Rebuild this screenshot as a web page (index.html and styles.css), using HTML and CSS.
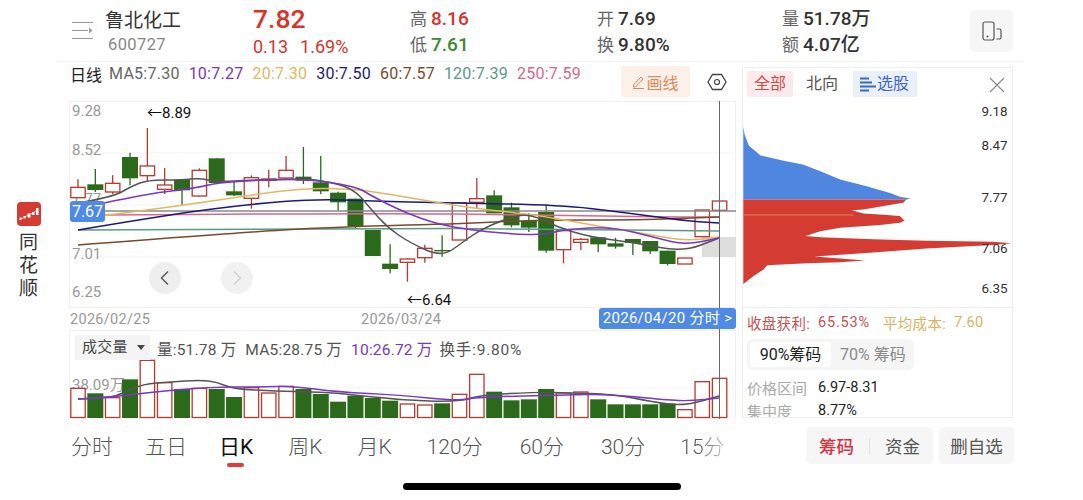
FILE: index.html
```html
<!DOCTYPE html>
<html lang="zh">
<head>
    <meta charset="UTF-8">
    <title>鲁北化工</title>
    <link rel="stylesheet" href="styles.css">
</head>
<body>
<div class="page">
    <div class="header">
        <svg class="menu-icon" width="22" height="20" viewBox="0 0 22 20">
            <path d="M0 1.5H21M0 9.5H16M0 17.5H21" stroke="#999" stroke-width="1.2" fill="none"/>
            <path d="M17 6.5L20.5 9.5L17 12.5Z" fill="#999"/>
        </svg>
        <div class="stock">
            <div class="stock-name">鲁北化工</div>
            <div class="stock-code">600727</div>
        </div>
        <div class="quote">
            <div class="price">7.82</div>
            <div class="change"><span>0.13</span><span>1.69%</span></div>
        </div>
        <div class="cell cell-hl">
            <div><em>高</em><b class="up">8.16</b></div>
            <div><em>低</em><b class="down">7.61</b></div>
        </div>
        <div class="cell cell-op">
            <div><em>开</em><b>7.69</b></div>
            <div><em>换</em><b>9.80%</b></div>
        </div>
        <div class="cell cell-vol">
            <div><em>量</em><b>51.78万</b></div>
            <div><em>额</em><b>4.07亿</b></div>
        </div>
        <div class="rotate-btn">
            <svg width="20" height="20" viewBox="0 0 20 20">
                <rect x="1" y="1" width="11" height="18" rx="2" fill="none" stroke="#555" stroke-width="1.2"/>
                <circle cx="5.5" cy="15.5" r="1" fill="#555"/>
                <path d="M14.5 8H17.5Q19 8 19 9.5V16.5Q19 18 17.5 18H14.5" fill="none" stroke="#555" stroke-width="1.2"/>
            </svg>
        </div>
    </div>

    <div class="main">
        <div class="side">
            <svg class="logo" width="24" height="24" viewBox="0 0 24 24">
                <rect width="24" height="24" rx="4" fill="#d43c33"/>
                <path d="M3 17L7 15.5L11 13L15 11.5L20 8" stroke="#f3b5ae" stroke-width="1" fill="none"/>
                <rect x="2.5" y="15.5" width="2" height="2.5" fill="#fff"/>
                <rect x="6.5" y="14" width="2" height="2.5" fill="#fff"/>
                <rect x="10.5" y="11.5" width="3" height="4" fill="#fff"/>
                <rect x="15" y="10" width="2.5" height="3" fill="#fff"/>
                <rect x="19" y="6" width="2.5" height="7" fill="#fff"/>
            </svg>
            <div class="app-name">同<br>花<br>顺</div>
        </div>

        <div class="chart-col">
            <div class="ma-row">
                <span class="ma-title">日线</span>
                <span class="ma c-ma5">MA5:7.30</span>
                <span class="ma c-ma10">10:7.27</span>
                <span class="ma c-ma20">20:7.30</span>
                <span class="ma c-ma30">30:7.50</span>
                <span class="ma c-ma60">60:7.57</span>
                <span class="ma c-ma120">120:7.39</span>
                <span class="ma c-ma250">250:7.59</span>
                <span class="draw-btn">
                    <svg width="13" height="14" viewBox="0 0 13 14">
                        <path d="M1.5 10L9 2L11 4L3.5 12H1.5ZM1 13.5H12" fill="none" stroke="#dc8a5c" stroke-width="1"/>
                    </svg>画线
                </span>
                <svg class="gear" width="20" height="18" viewBox="0 0 20 18">
                    <path d="M5.5 1.5H14.5L19 9L14.5 16.5H5.5L1 9Z" fill="none" stroke="#444" stroke-width="1.3"/>
                    <circle cx="10" cy="9" r="2.5" fill="none" stroke="#444" stroke-width="1.2"/>
                </svg>
            </div>

            <div class="kline">
                <svg id="klineSvg" width="667" height="207" viewBox="69 101 667 207"></svg>
                <div class="nav-btn nav-prev">
                    <svg width="12" height="16" viewBox="0 0 12 16"><path d="M9 1.5L2.5 8L9 14.5" fill="none" stroke="#555" stroke-width="1.4"/></svg>
                </div>
                <div class="nav-btn nav-next">
                    <svg width="12" height="16" viewBox="0 0 12 16"><path d="M3 1.5L9.5 8L3 14.5" fill="none" stroke="#d0d0d0" stroke-width="1.4"/></svg>
                </div>
                <div class="last-label">7.67</div>
            </div>

            <div class="date-row">
                <span class="date-first">2026/02/25</span>
                <span>2026/03/24</span>
                <span class="date-tag">2026/04/20 分时 &gt;</span>
            </div>

            <div class="volume">
                <svg id="volSvg" width="667" height="89" viewBox="69 330 667 89"></svg>
                <div class="vol-head">
                    <span class="vol-tag">成交量<i class="caret"></i></span>
                    <span class="vol-text">量:51.78 万</span>
                    <span class="vol-text">MA5:28.75 万</span>
                    <span class="vol-text c-ma10">10:26.72 万</span>
                    <span class="vol-text vol-turn">换手:9.80%</span>
                </div>
            </div>

            <div class="crosshair"></div>

            <div class="tabs">
                <span class="tab-cn">分时</span>
                <span class="tab-cn">五日</span>
                <span class="tab-on">日K</span>
                <span>周K</span>
                <span>月K</span>
                <span class="tab-wide">120分</span>
                <span class="tab-wide">60分</span>
                <span>30分</span>
                <span class="tab-fade">15分</span>
            </div>
        </div>

        <div class="right-col">
            <div class="panel">
                <div class="panel-tabs">
                    <span class="ptab ptab-on">全部</span>
                    <span class="ptab">北向</span>
                    <span class="ptab ptab-pick">
                        <svg width="16" height="15" viewBox="0 0 16 15">
                            <path d="M0 1.5H9M0 5.5H12M0 9.5H16M0 13.5H9" stroke="#3f66c8" stroke-width="1.8"/>
                        </svg>选股
                    </span>
                    <svg class="close" width="16" height="16" viewBox="0 0 16 16">
                        <path d="M1 1L15 15M15 1L1 15" stroke="#888" stroke-width="1.1"/>
                    </svg>
                </div>
                <svg class="chips" id="chipSvg" width="269" height="210" viewBox="743 98 269 210"></svg>
                <div class="profit">
                    <span class="profit-a profit-label">收盘获利:</span><span class="profit-a profit-num">65.53%</span>
                    <span class="profit-b profit-label">平均成本:</span><span class="profit-b">7.60</span>
                </div>
                <div class="seg">
                    <span class="seg-on">90%筹码</span>
                    <span>70% 筹码</span>
                </div>
                <div class="info"><span>价格区间</span><b>6.97-8.31</b></div>
                <div class="info"><span>集中度</span><b>8.77%</b></div>
            </div>
            <div class="actions">
                <div class="act-group">
                    <span class="act-on">筹码</span>
                    <i class="act-sep"></i>
                    <span>资金</span>
                </div>
                <div class="act-del">删自选</div>
            </div>
        </div>
    </div>

    <div class="home-bar"></div>
</div>
<script src="chart.js"></script>
</body>
</html>
```

FILE: styles.css
```css
*{
    margin: 0px;
    padding: 0px;
    box-sizing: border-box;
}
body{
    background: #fff;
    font-family: Roboto, "Noto Sans CJK SC", sans-serif;
    color: #333;
}
em, i{font-style: normal;}
.page{
    width: 1083px;
    height: 500px;
    position: relative;
    overflow: hidden;
}
.up{color: #d9332b;}
.down{color: #3c8a2e;}

/* header */
.header{
    height: 62px;
    margin: 0 60px 0 57px;
    padding-left: 15px;
    border-bottom: 1px solid #f3f3f3;
    display: flex;
    align-items: center;
}
.menu-icon{margin-top: 1px;}
.stock{
    width: 159px;
    padding: 2px 0 0 11px;
}
.stock-name{
    font-size: 19px;
    line-height: 26px;
    color: #333;
}
.stock-code{
    font-size: 16.5px;
    line-height: 22px;
    color: #888;
    padding-left: 3px;
    letter-spacing: .4px;
}
.quote{width: 157px;}
.price{
    font-size: 26.5px;
    font-weight: 500;
    line-height: 30px;
    color: #d9332b;
}
.change{
    font-size: 18px;
    line-height: 22px;
    color: #d9332b;
    margin-top: 2px;
    display: flex;
    gap: 12px;
}
.cell{
    font-size: 19px;
    line-height: 25px;
    padding-top: 2px;
}
.cell em{
    font-size: 17px;
    color: #666;
    margin-right: 4px;
}
.cell b{font-weight: 500; color: #333;}
.cell b.up{color: #d9332b;}
.cell b.down{color: #3c8a2e;}
.cell-hl{width: 187px;}
.cell-op{width: 185px;}
.cell-vol{width: 188px;}
.rotate-btn{
    width: 43px;
    height: 42px;
    background: #f6f6f6;
    border-radius: 5px;
    display: flex;
    align-items: center;
    justify-content: center;
}

/* body columns */
.main{display: flex;}
.side{
    width: 57px;
    padding-top: 140px;
    display: flex;
    flex-direction: column;
    align-items: center;
}
.logo{display: block;}
.app-name{
    font-size: 19px;
    line-height: 23px;
    margin-top: 5px;
    color: #333;
}
.chart-col{
    width: 667px;
    margin-left: 12px;
    position: relative;
}

/* ma row */
.ma-row{
    height: 39px;
    padding: 0 0 16px 1px;
    display: flex;
    align-items: center;
    font-size: 16px;
}
.ma-title{color: #222; margin-right: 7px;}
.ma{margin-right: 9px; letter-spacing: .25px;}
.c-ma5{color: #666;}
.c-ma10{color: #7a35c9;}
.c-ma20{color: #e3b85f;}
.c-ma30{color: #1a1a7a;}
.c-ma60{color: #7a4a2c;}
.c-ma120{color: #5a9a86;}
.c-ma250{color: #d8678a;}
.draw-btn{
    position: absolute;
    left: 552px;
    top: 4px;
    width: 69px;
    height: 31px;
    background: #fdf0e8;
    border-radius: 2px;
    color: #dc8a5c;
    font-size: 16px;
    display: flex;
    align-items: center;
    justify-content: center;
    gap: 1px;
}
.gear{
    position: absolute;
    left: 638px;
    top: 11px;
}

/* k line */
.kline{
    height: 207px;
    position: relative;
    border: 1px solid #f0f0f0;
}
.kline svg, .volume > svg{
    position: absolute;
    left: -1px;
    top: -1px;
}
.nav-btn{
    position: absolute;
    width: 32px;
    height: 32px;
    top: 160px;
    border-radius: 50%;
    display: flex;
    align-items: center;
    justify-content: center;
}
.nav-btn svg{position: static;}
.nav-prev{left: 79px; background: #eee;}
.nav-next{left: 151px; background: #f1f1f1;}
.last-label{
    position: absolute;
    left: 0;
    top: 99px;
    width: 35px;
    height: 21px;
    background: #4f8ae6;
    border-radius: 3px;
    color: #fff;
    font-size: 16px;
    line-height: 21px;
    text-align: center;
}
.date-row{
    height: 22px;
    padding-left: 1px;
    display: flex;
    align-items: center;
    font-size: 14.5px;
    color: #999;
    letter-spacing: .3px;
    position: relative;
}
.date-first{width: 291px;}
.date-tag{
    position: absolute;
    right: 0;
    top: 0;
    width: 137px;
    height: 21px;
    background: #4f8ae6;
    border-radius: 3px;
    color: #fff;
    font-size: 15px;
    line-height: 21px;
    text-align: center;
    z-index: 2;
}
.crosshair{
    position: absolute;
    left: 650px;
    top: 39px;
    width: 1px;
    height: 318px;
    background: #666;
}

/* volume */
.volume{
    height: 89px;
    position: relative;
    border: 1px solid #f0f0f0;
    border-bottom: 0;
}
.vol-head{
    position: relative;
    padding: 4px 0 0 5px;
    display: flex;
    align-items: center;
    font-size: 15.5px;
    color: #555;
    letter-spacing: .2px;
}
.vol-tag{
    width: 75px;
    height: 25px;
    background: #f4f4f4;
    color: #444;
    padding-left: 7px;
    font-size: 15px;
    line-height: 25px;
    display: flex;
    align-items: center;
    margin-right: 7px;
}
.caret{
    width: 0;
    height: 0;
    margin-left: 9px;
    border-left: 4px solid transparent;
    border-right: 4px solid transparent;
    border-top: 5px solid #444;
}
.vol-text{margin-right: 9px;}
.vol-turn{margin-left: -2px; letter-spacing: .8px;}

/* bottom tabs */
.tabs{
    height: 51px;
    padding-left: 2px;
    display: flex;
    align-items: center;
    gap: 35px;
    font-size: 21px;
    font-weight: 300;
    color: #555;
}
.tab-cn{margin-right: -3px;}
.tab-wide{margin-right: 2px;}
.tab-on{
    color: #111;
    font-weight: 400;
    position: relative;
}
.tab-on::after{
    content: "";
    position: absolute;
    left: 8px;
    bottom: -7px;
    width: 17px;
    height: 4px;
    border-radius: 2px;
    background: #e23b3b;
}
.tab-fade{
    color: transparent;
    background: linear-gradient(90deg, #555 40%, #ccc 100%);
    -webkit-background-clip: text;
    background-clip: text;
}

/* right panel */
.right-col{
    width: 272px;
    margin-left: 6px;
    padding-top: 5px;
}
.panel{
    width: 271px;
    height: 351px;
    border: 1px solid #eee;
    overflow: hidden;
}
.panel-tabs{
    height: 30px;
    padding: 3px 0 0 4px;
    display: flex;
    align-items: flex-start;
    position: relative;
}
.ptab{
    height: 26px;
    line-height: 26px;
    font-size: 16px;
    color: #555;
    padding: 0 7px;
    margin-right: 6px;
    display: flex;
    align-items: center;
}
.ptab-on{
    color: #cf4a4a;
    background: #fdeaea;
    border-radius: 2px;
}
.ptab-pick{
    color: #3f66c8;
    background: #e9effb;
    border-radius: 2px;
    margin-left: 2px;
    gap: 1px;
    padding: 0 8px 0 7px;
}
.close{
    position: absolute;
    right: 7px;
    top: 9px;
}
.chips{
    display: block;
    border-bottom: 1px solid #eee;
}
.profit{
    height: 29px;
    padding-left: 4px;
    display: flex;
    align-items: center;
    font-size: 14.5px;
    letter-spacing: .3px;
}
.profit-a{color: #c8504f;}
.profit-label{width: 71px; white-space: nowrap;}
.profit-num{width: 65px; letter-spacing: .8px;}
.profit-b{color: #dcb161;}
.seg{
    width: 167px;
    height: 31px;
    margin: 2px 0 0 4px;
    padding: 3px;
    background: #f5f5f5;
    border-radius: 6px;
    display: flex;
    align-items: center;
    font-size: 16px;
    color: #888;
}
.seg span{
    height: 25px;
    line-height: 25px;
    padding-left: 9px;
    white-space: nowrap;
}
.seg .seg-on{
    background: #fff;
    color: #222;
    border-radius: 4px;
    width: 81px;
    text-align: center;
    padding: 0;
}
.info{
    height: 23px;
    padding-left: 4px;
    display: flex;
    align-items: center;
    font-size: 15px;
    color: #aaa;
}
.seg + .info{margin-top: 6px;}
.info span{width: 71px;}
.info b{
    font-weight: 400;
    font-size: 14.5px;
    color: #222;
}
.actions{
    margin: 9px 0 0 64px;
    display: flex;
    gap: 6px;
}
.act-group, .act-del{
    height: 37px;
    background: #f6f6f6;
    border-radius: 5px;
    font-size: 17.5px;
    color: #555;
    display: flex;
    align-items: center;
    justify-content: center;
}
.act-group{
    width: 127px;
    gap: 15px;
}
.act-on{color: #d9323f; font-weight: 500;}
.act-sep{
    width: 1px;
    height: 16px;
    background: #e2e2e2;
}
.act-del{width: 75px;}

.home-bar{
    position: absolute;
    left: 403px;
    top: 483px;
    width: 278px;
    height: 7px;
    border-radius: 4px;
    background: #000;
}

/* svg bits */
.axis{
    font-size: 15px;
    fill: #999;
}
.mark{
    font-size: 15px;
    fill: #111;
}
.chip-price{
    font-size: 13.5px;
    fill: #333;
}
```

FILE: chart.js
```js
var RED = "#b9382e";
var GREEN = "#2a6a1a";
var STEP = 17.34;

function cx(i) {
    return 78 + STEP * i;
}

// r/g, body top, body bottom, wick top, wick bottom (read off at 3x, y = 100 + v/3)
var candles = [
    ["r",262,293,238,293],["g",253,270,207,276],["r",250,276,226,282],["g",171,235,158,256],
    ["r",198,227,84,243],["r",255,268,204,282],["g",240,271,240,316],["r",211,288,205,290],
    ["g",175,249,175,249],["g",274,286,245,288],["r",233,295,226,326],["r",237,241,209,262],
    ["r",211,234,168,240],["g",230,242,141,252],["g",247,274,168,282],["g",278,307,275,332],
    ["g",296,380,296,384],["g",390,468,390,468],["g",491,507,433,520],["r",477,487,475,545],
    ["r",445,473,434,488],["g",450,454,406,470],["r",308,420,308,420],["r",296,307,234,325],
    ["g",286,340,271,340],["g",322,376,308,382],["g",363,383,340,396],["g",336,452,314,458],
    ["r",392,449,392,490],["r",418,427,415,450],["g",412,433,412,457],["g",430,440,413,446],
    ["g",417,429,417,465],["g",423,454,423,462],["g",452,492,452,496],["r",474,492,474,492],
    ["r",330,410,330,410],["r",303,331,303,331]
];

var lines = [
    ["#d8678a",[[104,215],[370,213],[537,215],[670,217],[719,217]]],
    ["#5a9a86",[[78,230],[370,228],[537,229],[719,231]]],
    ["#7a4a2c",[[78,245],[233,233],[333,227],[453,224],[537,220],[637,220],[719,217]]],
    ["#1a1a7a",[[78,230],[167,215],[250,204],[317,199],[370,201],[450,203],[560,205],[620,212],[687,221],[719,223]]],
    ["#e3b85f",[[100,216],[187,205],[250,195],[307,188],[347,189],[370,191],[440,203],[487,210],[537,215],[603,227],[653,235],[685,241],[719,237]]],
    ["#555",[[78,203],[113,197],[130,187],[147,180],[182,180],[200,178],[217,182],[250,180],[300,179],[320,180],[353,188],[370,208],[387,227],[410,243],[442,257],[463,242],[480,230],[503,220],[528,213],[557,227],[590,237],[637,243],[683,252],[719,238]]],
    ["#7a35c9",[[104,203],[147,194],[180,190],[200,187],[217,183],[260,180],[310,179],[357,187],[370,195],[403,212],[440,225],[480,231],[513,234],[543,235],[567,229],[613,227],[657,238],[685,245],[719,238]]]
];

var volTops = [250,265,278,223,166,233,252,250,252,276,248,264,244,252,267,290,272,279,287,297,
    300,295,268,208,260,286,283,252,264,261,283,298,298,298,295,314,230,220];

var volLines = [
    ["#555",[[78,399],[110,398],[123,393],[143,384],[170,382],[200,380],[217,382],[233,389],[277,391],[313,392],[337,393],[400,400],[458,402],[480,395],[540,392],[567,393],[613,394],[653,402],[684,406],[719,396]]],
    ["#7a35c9",[[78,399],[113,397],[153,392],[210,387],[260,387],[293,386],[337,392],[400,395],[457,401],[480,397],[567,395],[607,394],[667,400],[690,401],[719,398]]]
];

var chipBlue = [[8,200],[12,225],[25,258],[60,287],[130,303],[190,315],[240,335],[300,360],[380,380],[450,400],[480,412],[512,417],[500,420],[8,420]];
var chipRed = [[8,420],[500,420],[490,430],[440,438],[370,450],[335,452],[370,462],[430,466],[480,470],[494,484],[480,490],[420,497],[300,505],[240,516],[195,530],[240,534],[400,540],[560,544],[760,547],[818,552],[760,557],[560,568],[420,578],[280,588],[222,592],[300,598],[375,604],[300,609],[200,612],[80,618],[70,630],[40,650],[8,675]];

function smooth(pts) {
    var d = "M" + pts[0][0] + " " + pts[0][1];
    for (var i = 1; i < pts.length - 1; i++) {
        var mx = (pts[i][0] + pts[i + 1][0]) / 2;
        var my = (pts[i][1] + pts[i + 1][1]) / 2;
        d += "Q" + pts[i][0] + " " + pts[i][1] + " " + mx + " " + my;
    }
    var last = pts[pts.length - 1];
    return d + "L" + last[0] + " " + last[1];
}

function drawLines(list, width) {
    var s = "";
    for (var i = 0; i < list.length; i++) {
        s += '<path d="' + smooth(list[i][1]) + '" fill="none" stroke="' + list[i][0] + '" stroke-width="' + width + '"/>';
    }
    return s;
}

function text(x, y, cls, str) {
    return '<text x="' + x + '" y="' + y + '" class="' + cls + '">' + str + '</text>';
}

function drawKline() {
    var s = "";
    s += '<path d="M70 153H736M70 257H736M70 205H736" stroke="#f3f3f3" fill="none"/>';
    s += '<rect x="702" y="237" width="34" height="20" fill="#ddd"/>';
    s += text(72, 116, "axis", "9.28") + text(72, 155, "axis", "8.52") + text(72, 204, "axis", "7.77");
    s += text(72, 259, "axis", "7.01") + text(72, 297, "axis", "6.25");
    for (var i = 0; i < candles.length; i++) {
        var c = candles[i];
        var x = cx(i);
        var color = c[0] == "r" ? RED : GREEN;
        var top = 100 + c[1] / 3;
        var h = (c[2] - c[1]) / 3;
        s += '<path d="M' + x + " " + (100 + c[3] / 3) + "V" + (100 + c[4] / 3) + '" stroke="' + color + '" stroke-width="1.3"/>';
        if (c[0] == "r") {
            s += '<rect x="' + (x - 7.2) + '" y="' + top + '" width="14.4" height="' + h + '" fill="#fff" stroke="' + color + '" stroke-width="1.3"/>';
        } else {
            s += '<rect x="' + (x - 8) + '" y="' + top + '" width="16" height="' + h + '" fill="' + color + '"/>';
        }
    }
    s += '<path d="M70 211H736" stroke="#888" stroke-width="1.3"/>';
    s += drawLines(lines, 1.5);
    s += text(147, 118, "mark", "←8.89") + text(407, 305, "mark", "←6.64");
    document.getElementById("klineSvg").innerHTML = s;
}

function drawVolume() {
    var s = "";
    s += '<path d="M70 388H736" stroke="#f3f3f3" fill="none"/>';
    s += text(72, 390, "axis", "38.09万");
    for (var i = 0; i < volTops.length; i++) {
        var x = cx(i);
        var top = 305 + volTops[i] / 3;
        var h = 417.5 - top;
        if (candles[i][0] == "r") {
            s += '<rect x="' + (x - 7.2) + '" y="' + top + '" width="14.4" height="' + h + '" fill="#fff" stroke="' + RED + '" stroke-width="1.3"/>';
        } else {
            s += '<rect x="' + (x - 8) + '" y="' + top + '" width="16" height="' + (h + 0.5) + '" fill="' + GREEN + '"/>';
        }
    }
    s += drawLines(volLines, 1.5);
    document.getElementById("volSvg").innerHTML = s;
}

function chipPoints(list) {
    var out = [];
    for (var i = 0; i < list.length; i++) {
        out.push((740 + list[i][0] / 3) + "," + (60 + list[i][1] / 3));
    }
    return out.join(" ");
}

function drawChips() {
    var s = "";
    s += '<polygon points="' + chipPoints(chipBlue) + '" fill="#4f86e0"/>';
    s += '<polygon points="' + chipPoints(chipRed) + '" fill="#d43c33"/>';
    s += '<path d="M743 215.5H853" stroke="#f0a070" stroke-width="0.7"/>';
    s += text(982, 116, "chip-price", "9.18") + text(982, 150, "chip-price", "8.47") + text(982, 203, "chip-price", "7.77");
    s += text(982, 254, "chip-price", "7.06") + text(982, 294, "chip-price", "6.35");
    document.getElementById("chipSvg").innerHTML = s;
}

drawKline();
drawVolume();
drawChips();
```
